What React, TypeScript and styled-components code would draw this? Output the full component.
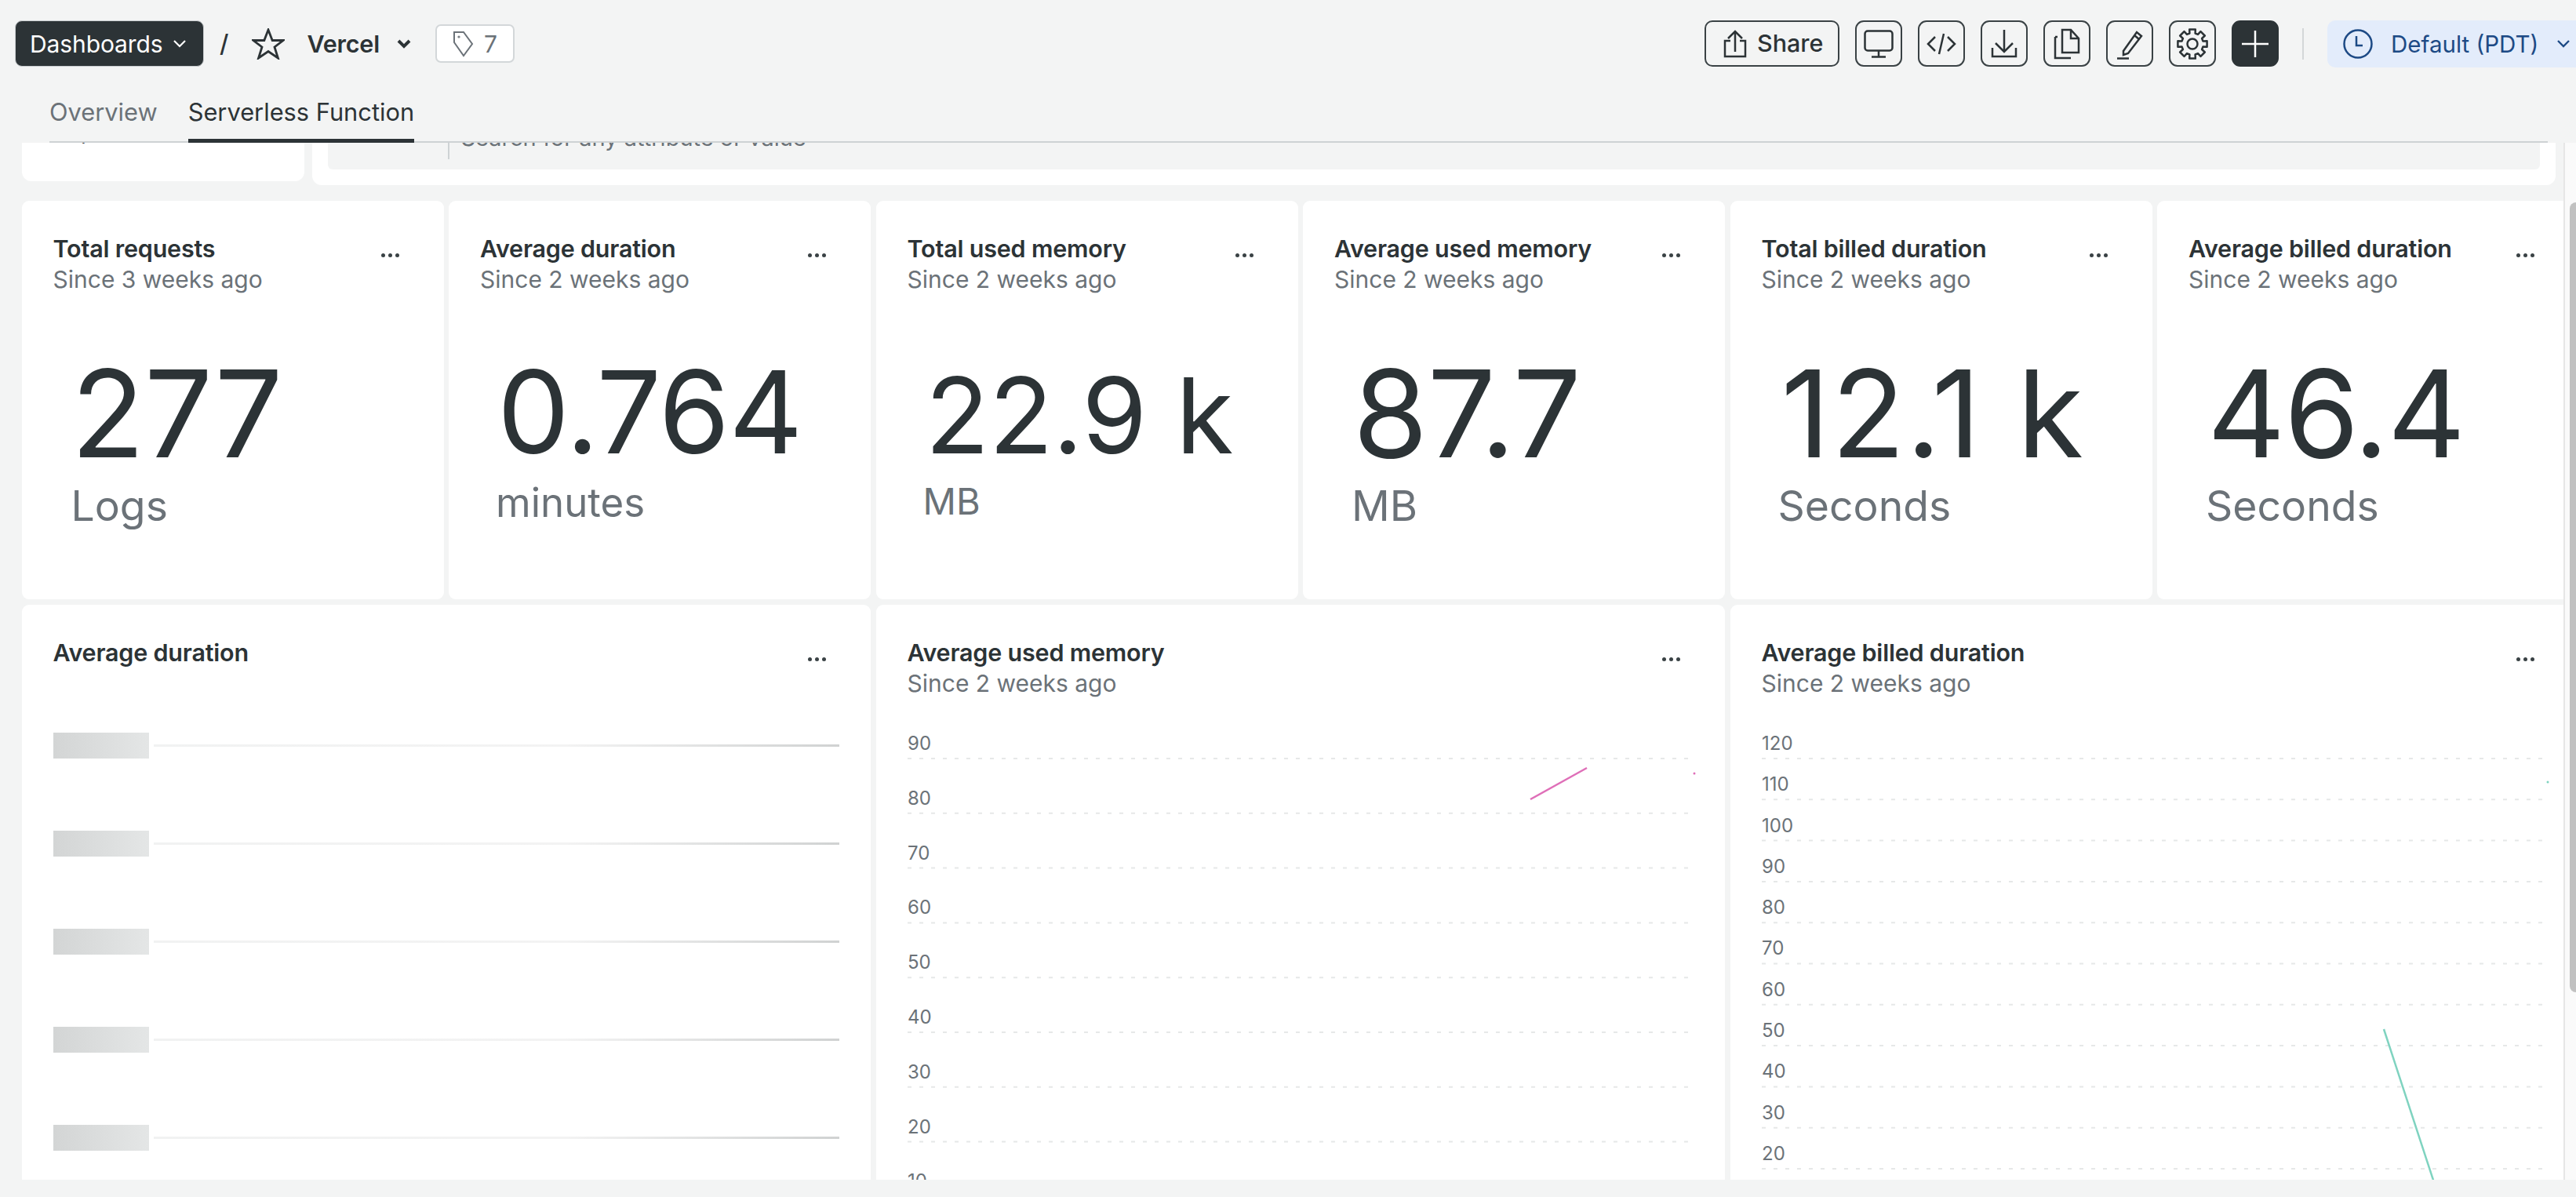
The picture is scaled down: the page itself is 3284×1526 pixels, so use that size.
import styled, { createGlobalStyle } from "styled-components";

const INK = "#2c3336";
const MUTED = "#6b7278";

const GlobalStyle = createGlobalStyle`
  html, body {
    margin: 0;
    padding: 0;
    background: #f3f4f4;
    overflow: hidden;
  }
  * { box-sizing: border-box; }
  body {
    font-family: Inter, "Noto Sans", "Liberation Sans", sans-serif;
    color: ${INK};
  }
`;

const Page = styled.div`
  width: 3284px;
  height: 1526px;
  display: flex;
  flex-direction: column;
  overflow: hidden;
  background: #f3f4f4;
`;

const Header = styled.header`
  height: 182px;
  flex: none;
  display: flex;
  flex-direction: column;
`;

const TopBar = styled.div`
  display: flex;
  align-items: center;
  justify-content: space-between;
  height: 59px;
  margin-top: 26px;
  padding-left: 19px;
`;

const Group = styled.div`
  display: flex;
  align-items: center;
`;

const DashboardsButton = styled.button`
  display: flex;
  align-items: center;
  width: 241px;
  height: 59px;
  padding: 0 0 0 18px;
  background: ${INK};
  border: 1px solid #c9cdcf;
  border-radius: 9px;
  color: #fff;
  font: 400 30px/1 Inter, sans-serif;
  letter-spacing: -0.1px;
`;

const Slash = styled.span`
  margin-left: 20px;
  font-size: 31px;
  font-weight: 500;
`;

const StarWrap = styled.span`
  display: flex;
  margin-left: 30px;
`;

const Name = styled.span`
  margin-left: 28px;
  font-size: 30.5px;
  font-weight: 600;
  letter-spacing: -0.2px;
`;

const TagBox = styled.div`
  display: flex;
  align-items: center;
  width: 101px;
  height: 49px;
  margin-left: 31px;
  padding-left: 20px;
  gap: 13px;
  background: #fff;
  border: 2px solid #d3d7d9;
  border-radius: 7px;
  color: ${MUTED};
  font-size: 30px;
`;

const ShareButton = styled.button`
  display: flex;
  align-items: center;
  width: 172px;
  height: 59px;
  padding: 0 0 0 22px;
  gap: 13px;
  background: transparent;
  border: 2.5px solid #3a4245;
  border-radius: 10px;
  color: ${INK};
  font: 500 30.5px/1 Inter, sans-serif;
`;

const IconButton = styled.button<{ $dark?: boolean }>`
  display: flex;
  align-items: center;
  justify-content: center;
  width: 60px;
  height: 59px;
  margin-left: 20px;
  padding: 0;
  background: ${(p) => (p.$dark ? INK : "transparent")};
  border: 2.5px solid ${(p) => (p.$dark ? INK : "#3a4245")};
  border-radius: 11px;
`;

const Divider = styled.span`
  width: 2px;
  height: 40px;
  margin-left: 30px;
  background: #d4d7d8;
`;

const ZoneChip = styled.div`
  display: flex;
  align-items: center;
  width: 317px;
  height: 60px;
  margin-left: 30px;
  padding-left: 20px;
  gap: 23px;
  background: #e3ecfb;
  border-radius: 10px 0 0 10px;
  color: #1d4a85;
  font-size: 29.5px;
`;

const Tabs = styled.nav`
  display: flex;
  align-items: flex-end;
  gap: 39px;
  margin: auto 36px 0 63px;
  height: 66px;
  border-bottom: 2px solid #ced2d4;
`;

const Tab = styled.div<{ $active?: boolean }>`
  height: 67px;
  margin-bottom: -2px;
  padding-top: 10px;
  font-size: 30.8px;
  line-height: 36px;
  white-space: nowrap;
  color: ${(p) => (p.$active ? INK : MUTED)};
  border-bottom: 5px solid ${(p) => (p.$active ? INK : "transparent")};
`;

const Viewport = styled.main`
  height: 1322px;
  flex: none;
  display: flex;
`;

const Scroller = styled.div`
  flex: 1;
  min-width: 0;
  padding-left: 27.5px;
  overflow: hidden;
`;

const FilterRow = styled.div`
  display: flex;
  align-items: flex-start;
  gap: 10px;
  height: 74px;
`;

const ClippedCard = styled.div`
  flex: none;
  width: 360px;
  height: 49px;
  padding-left: 46px;
  overflow: hidden;
  background: #fff;
  border-radius: 0 0 12px 12px;
  font-size: 26px;
`;

const ClippedText = styled.div`
  margin-top: -15px;
  line-height: 4px;
`;

const SearchPanel = styled.div`
  flex: none;
  width: 2860px;
  height: 54px;
  padding: 0 20px 20px;
  background: #fff;
  border-radius: 0 0 12px 12px;
`;

const SearchField = styled.div`
  display: flex;
  height: 100%;
  overflow: hidden;
  background: #f3f4f4;
  border-radius: 0 0 6px 6px;
  font-size: 29px;
  line-height: 30px;
`;

const SearchKey = styled.div`
  width: 155px;
  height: 21px;
  border-right: 2px solid #ced2d4;
  flex: none;
`;

const SearchHint = styled.div`
  margin: -21.5px 0 0 15px;
  color: ${MUTED};
`;

const Grid = styled.div`
  display: grid;
  grid-template-columns: repeat(6, 538px);
  grid-template-rows: 508px 900px;
  gap: 7px 6.5px;
`;

const Card = styled.section<{ $span?: number }>`
  position: relative;
  grid-column: span ${(p) => p.$span ?? 1};
  padding: 42px 40px 0 40px;
  background: #fff;
  border-radius: 9px;
  min-width: 0;
`;

const CardTitle = styled.h3`
  margin: 0;
  font-size: 30.5px;
  line-height: 38px;
  font-weight: 600;
  letter-spacing: -0.2px;
  color: ${INK};
`;

const CardSub = styled.div`
  font-size: 30px;
  line-height: 41px;
  color: ${MUTED};
`;

const Dots = styled.span`
  position: absolute;
  top: 67px;
  right: 57px;
  display: flex;
  gap: 4px;
  & > i {
    width: 5px;
    height: 5px;
    border-radius: 50%;
    background: #3a4245;
  }
`;

const Billboard = styled.div<{ $left: number; $top: number }>`
  padding: ${(p) => p.$top}px 0 0 ${(p) => p.$left}px;
`;

const BigValue = styled.div<{ $size: number; $tracking: number; $wordGap: number }>`
  font-size: ${(p) => p.$size}px;
  line-height: ${(p) => Math.round(p.$size * 1.1)}px;
  font-weight: 400;
  letter-spacing: ${(p) => p.$tracking}px;
  word-spacing: ${(p) => p.$wordGap}px;
  white-space: nowrap;
  color: ${INK};
`;

const BigUnit = styled.div<{ $left: number; $top: number; $size: number }>`
  margin: ${(p) => p.$top}px 0 0 ${(p) => p.$left}px;
  font-size: ${(p) => p.$size}px;
  line-height: 64px;
  color: ${MUTED};
`;

const SkeletonList = styled.div`
  display: flex;
  flex-direction: column;
  gap: 92px;
  margin-top: 83px;
`;

const SkeletonRow = styled.div`
  display: flex;
  align-items: center;
  gap: 6px;
`;

const SkeletonBlock = styled.div`
  width: 123px;
  height: 33px;
  background: linear-gradient(90deg, #d3d5d5, #e4e6e6);
`;

const SkeletonLine = styled.div`
  width: 875px;
  height: 3px;
  background: linear-gradient(90deg, #f1f2f2, #f3f3f3 60%, #d0d2d2);
`;

const ChartSvg = styled.svg`
  display: block;
  overflow: visible;
  font-family: Inter, sans-serif;
  font-size: 24px;
  fill: ${MUTED};
`;

const ScrollTrack = styled.div`
  flex: none;
  width: 16px;
  padding: 76px 0 0 6px;
  background: #fafafa;
  border-left: 2px solid #e6e6e6;
`;

const ScrollThumb = styled.div`
  height: 1007px;
  background: #c1c1c1;
  border-radius: 8px 0 0 8px;
`;

const Outline = (p: { w: number; h: number; children: React.ReactNode; color?: string; sw?: number }) => (
  <svg
    width={p.w}
    height={p.h}
    viewBox={`0 0 ${p.w} ${p.h}`}
    fill="none"
    stroke={p.color ?? INK}
    strokeWidth={p.sw ?? 2.5}
  >
    {p.children}
  </svg>
);

// cog outline, 8 teeth
function gearPath(cx: number, cy: number, outer: number, inner: number) {
  const pts: string[] = [];
  for (let i = 0; i < 8; i++) {
    const a = (i * Math.PI) / 4 - Math.PI / 2;
    const spread = 0.2;
    const gap = 0.26;
    const add = (ang: number, r: number) =>
      pts.push(`${(cx + r * Math.cos(ang)).toFixed(1)} ${(cy + r * Math.sin(ang)).toFixed(1)}`);
    add(a - gap, inner);
    add(a - spread, outer);
    add(a + spread, outer);
    add(a + gap, inner);
  }
  return `M${pts.join("L")}Z`;
}

const bars = [
  { title: "Total requests", since: "Since 3 weeks ago", value: "277", unit: "Logs", size: 154, tracking: -0.5, wordGap: 0, left: 23, top: 66, unitLeft: 0, unitTop: 1, unitSize: 53.5 },
  { title: "Average duration", since: "Since 2 weeks ago", value: "0.764", unit: "minutes", size: 146, tracking: -1, wordGap: 0, left: 22, top: 68, unitLeft: -2, unitTop: 3, unitSize: 51 },
  { title: "Total used memory", since: "Since 2 weeks ago", value: "22.9 k", unit: "MB", size: 134, tracking: -0.5, wordGap: 0, left: 23, top: 79, unitLeft: -3, unitTop: 4, unitSize: 47 },
  { title: "Average used memory", since: "Since 2 weeks ago", value: "87.7", unit: "MB", size: 154, tracking: -0.5, wordGap: 0, left: 24, top: 66, unitLeft: -2, unitTop: 1, unitSize: 54 },
  { title: "Total billed duration", since: "Since 2 weeks ago", value: "12.1 k", unit: "Seconds", size: 154, tracking: 1.5, wordGap: 0, left: 25, top: 66, unitLeft: -4, unitTop: 1, unitSize: 53.5 },
  { title: "Average billed duration", since: "Since 2 weeks ago", value: "46.4", unit: "Seconds", size: 154, tracking: -1.5, wordGap: 0, left: 24, top: 66, unitLeft: -2, unitTop: 1, unitSize: 53.5 },
];

type ChartProps = {
  width: number;
  first: number;
  step: number;
  labels: number[];
  color: string;
  line: [number, number, number, number];
  dot: [number, number];
};

function LineChart({ width, first, step, labels, color, line, dot }: ChartProps) {
  const height = first + step * labels.length;
  return (
    <ChartSvg width={width} height={height} viewBox={`0 0 ${width} ${height}`}>
      {labels.map((l, i) => (
        <g key={l}>
          <text x="0" y={first + i * step - 11}>{l}</text>
          <line
            x1="0"
            x2={width}
            y1={first + i * step}
            y2={first + i * step}
            stroke="#e6e8e8"
            strokeWidth="2"
            strokeDasharray="5 10"
          />
        </g>
      ))}
      <line x1={line[0]} y1={line[1]} x2={line[2]} y2={line[3]} stroke={color} strokeWidth="2.5" />
      <circle cx={dot[0]} cy={dot[1]} r="1.5" fill={color} />
    </ChartSvg>
  );
}

export default function App() {
  return (
    <Page>
      <GlobalStyle />
      <Header>
        <TopBar>
          <Group>
            <DashboardsButton>
              Dashboards
              <svg width="18" height="12" viewBox="0 0 18 12" fill="none" stroke="#fff" strokeWidth="2.2" style={{ marginLeft: 12 }}>
                <path d="M2 2l7 7 7-7" />
              </svg>
            </DashboardsButton>
            <Slash>/</Slash>
            <StarWrap>
              <Outline w={42} h={40} sw={2.8}>
                <path d="M21 2l5.2 13.5H40L29 24l4.4 14L21 29.5 8.6 38 13 24 2 15.5h13.8z" />
              </Outline>
            </StarWrap>
            <Name>Vercel</Name>
            <svg width="18" height="14" viewBox="0 0 18 14" fill="none" stroke={INK} strokeWidth="4" style={{ marginLeft: 22 }}>
              <path d="M2 3l7 7 7-7" />
            </svg>
            <TagBox>
              <svg width="27" height="34" viewBox="0 0 27 34" fill="none" stroke={MUTED} strokeWidth="2">
                <path d="M2 2h12l11 15-11 15L2 15z" />
                <circle cx="8" cy="8" r="0.6" />
              </svg>
              7
            </TagBox>
          </Group>
          <Group>
            <ShareButton>
              <Outline w={30} h={36}>
                <path d="M9 14H2v20h26V14h-7M15 28V3M6 11l9-9 9 9" />
              </Outline>
              Share
            </ShareButton>
            <IconButton>
              <Outline w={38} h={36}>
                <rect x="1.5" y="1.5" width="35" height="25" rx="3.5" />
                <path d="M19 27v7M10 34.5h18" />
              </Outline>
            </IconButton>
            <IconButton>
              <Outline w={38} h={30}>
                <path d="M11 6l-9 9 9 9M27 6l9 9-9 9M22 2l-6 26" />
              </Outline>
            </IconButton>
            <IconButton>
              <Outline w={34} h={36}>
                <path d="M17 0v27M6 17l11 11 11-11M2 23v11h30V23" />
              </Outline>
            </IconButton>
            <IconButton>
              <Outline w={34} h={40}>
                <path d="M11 2h11l10 11v18H11zM22 2v11h10M2 11v27h20M2 11h3" />
              </Outline>
            </IconButton>
            <IconButton>
              <Outline w={38} h={40}>
                <path d="M11 29L28 5l6 5-17 22-6 2zM25 9l6 5" />
                <path d="M3 38.5h15" />
              </Outline>
            </IconButton>
            <IconButton>
              <Outline w={40} h={40}>
                <path d={gearPath(20, 20, 19, 14)} strokeLinejoin="round" />
                <circle cx="20" cy="20" r="6.5" />
              </Outline>
            </IconButton>
            <IconButton $dark>
              <Outline w={34} h={34} color="#fff" sw={2.5}>
                <path d="M17 0v34M0 17h34" />
              </Outline>
            </IconButton>
            <Divider />
            <ZoneChip>
              <Outline w={38} h={38} color="#1d4a85">
                <circle cx="19" cy="19" r="17.5" />
                <path d="M17 9v12h8" />
              </Outline>
              Default (PDT)
              <svg width="18" height="12" viewBox="0 0 18 12" fill="none" stroke="#1d4a85" strokeWidth="2.4">
                <path d="M2 2l7 7 7-7" />
              </svg>
            </ZoneChip>
          </Group>
        </TopBar>
        <Tabs>
          <Tab>Overview</Tab>
          <Tab $active>Serverless Function</Tab>
        </Tabs>
      </Header>

      <Viewport>
        <Scroller>
          <FilterRow>
            <ClippedCard>
              <ClippedText>Explorer</ClippedText>
            </ClippedCard>
            <SearchPanel>
              <SearchField>
                <SearchKey />
                <SearchHint>Search for any attribute or value</SearchHint>
              </SearchField>
            </SearchPanel>
          </FilterRow>
          <Grid>
            {bars.map((b) => (
              <Card key={b.title}>
                <CardTitle>{b.title}</CardTitle>
                <CardSub>{b.since}</CardSub>
                <Dots><i /><i /><i /></Dots>
                <Billboard $left={b.left} $top={b.top}>
                  <BigValue $size={b.size} $tracking={b.tracking} $wordGap={b.wordGap}>{b.value}</BigValue>
                  <BigUnit $left={b.unitLeft} $top={b.unitTop} $size={b.unitSize}>{b.unit}</BigUnit>
                </Billboard>
              </Card>
            ))}
            <Card $span={2}>
              <CardTitle>Average duration</CardTitle>
              <Dots><i /><i /><i /></Dots>
              <SkeletonList>
                {[0, 1, 2, 3, 4].map((i) => (
                  <SkeletonRow key={i}>
                    <SkeletonBlock />
                    <SkeletonLine />
                  </SkeletonRow>
                ))}
              </SkeletonList>
            </Card>
            <Card $span={2}>
              <CardTitle>Average used memory</CardTitle>
              <CardSub>Since 2 weeks ago</CardSub>
              <Dots><i /><i /><i /></Dots>
              <LineChart
                width={995}
                first={75}
                step={69.8}
                labels={[90, 80, 70, 60, 50, 40, 30, 20, 10]}
                color="#df6fb8"
                line={[794, 127, 866, 87]}
                dot={[1003, 94]}
              />
            </Card>
            <Card $span={2}>
              <CardTitle>Average billed duration</CardTitle>
              <CardSub>Since 2 weeks ago</CardSub>
              <Dots><i /><i /><i /></Dots>
              <LineChart
                width={995}
                first={75}
                step={52.3}
                labels={[120, 110, 100, 90, 80, 70, 60, 50, 40, 30, 20]}
                color="#7fd3c0"
                line={[793, 420, 869, 652]}
                dot={[1002, 105]}
              />
            </Card>
          </Grid>
        </Scroller>
        <ScrollTrack>
          <ScrollThumb />
        </ScrollTrack>
      </Viewport>
    </Page>
  );
}
